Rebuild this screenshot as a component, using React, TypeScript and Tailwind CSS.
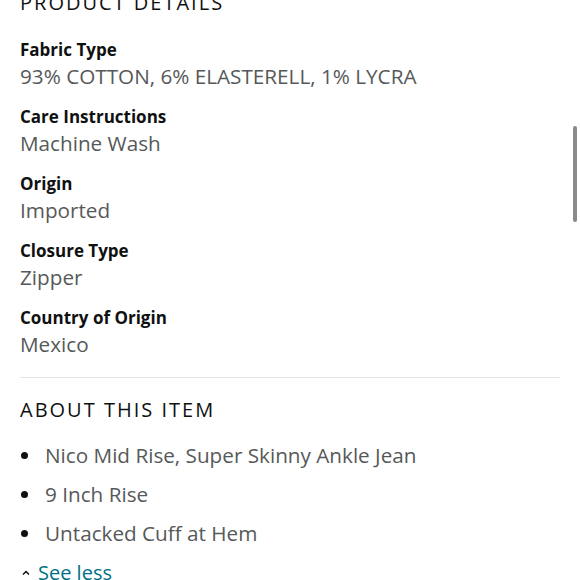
const details = [
  { label: "Fabric Type", value: "93% COTTON, 6% ELASTERELL, 1% LYCRA" },
  { label: "Care Instructions", value: "Machine Wash" },
  { label: "Origin", value: "Imported" },
  { label: "Closure Type", value: "Zipper" },
  { label: "Country of Origin", value: "Mexico" },
]

const bullets = [
  "Nico Mid Rise, Super Skinny Ankle Jean",
  "9 Inch Rise",
  "Untacked Cuff at Hem",
]

export default function App() {
  return (
    <div className="relative h-[580px] w-[580px] overflow-hidden bg-white font-['Open_Sans',sans-serif]">
      <div className="absolute right-[3px] top-[126px] h-[96px] w-[4px] rounded-full bg-[#8a8a8a]" />
      <div className="-mt-[11px] px-5">
        <h2 className="text-[20px] leading-[28px] tracking-[2px] text-[#0f1111]">PRODUCT DETAILS</h2>
        <div className="mt-[19px] flex flex-col gap-[13px]">
          {details.map((d) => (
            <div key={d.label}>
              <div className="text-[17px] font-bold leading-[27px] text-[#0f1111]">{d.label}</div>
              <div className="text-[20.7px] leading-[27px] text-[#565959]">{d.value}</div>
            </div>
          ))}
        </div>
        <div className="mt-[19px] h-px bg-[#e3e6e6]" />
        <h2 className="mt-[18px] text-[20px] leading-[28px] tracking-[2px] text-[#0f1111]">ABOUT THIS ITEM</h2>
        <ul className="mt-[12px]">
          {bullets.map((b) => (
            <li key={b} className="flex h-[39px] items-center">
              <span className="ml-[1px] mr-[17px] size-[7px] rounded-full bg-[#0f1111]" />
              <span className="text-[20.7px] leading-[27px] text-[#565959]">{b}</span>
            </li>
          ))}
        </ul>
        <div className="mt-[6px] flex items-center text-[20px] leading-[27px] text-[#007185]">
          <svg width="10" height="10" viewBox="0 0 10 10" className="ml-[1px] mr-[7px]">
            <path d="M2 6.5 L5 3.5 L8 6.5" fill="none" stroke="#0f1111" strokeWidth="1.5" />
          </svg>
          See less
        </div>
      </div>
    </div>
  )
}
